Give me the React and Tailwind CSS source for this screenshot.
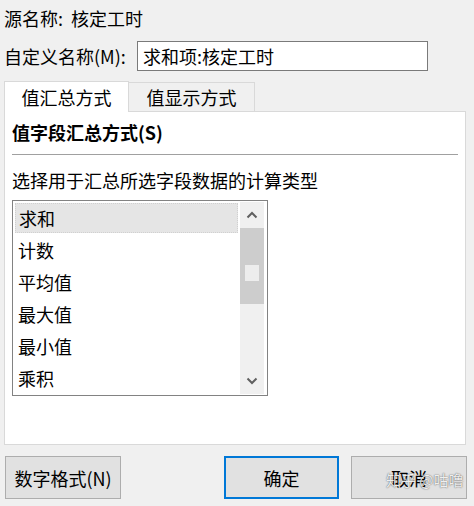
export default function App() {
    const items = ["求和", "计数", "平均值", "最大值", "最小值", "乘积"];

    return (
        <div className="w-[474px] h-[506px] bg-[#f0f0f0] overflow-hidden relative text-[18px] text-black font-['Noto_Sans_CJK_SC','Noto_Sans',sans-serif]">
            <div className="h-[41px] pl-[4px] pt-[7px] leading-[22px]">
                源名称:&nbsp;&nbsp;核定工时
            </div>

            <div className="flex items-center h-[30px]">
                <div className="w-[137px] pl-[4px] leading-[22px]">自定义名称(M):</div>
                <div className="w-[291px] h-[30px] border border-[#7a7a7a] bg-white flex items-center pl-[5px] leading-[22px]">
                    求和项:核定工时
                </div>
            </div>

            {/* tabs */}
            <div className="flex items-end h-[30px] mt-[10px] ml-[4px] relative z-10">
                <div className="w-[125px] h-[31px] -mb-px bg-white border border-b-0 border-[#d9d9d9] flex items-center justify-center leading-[22px]">
                    值汇总方式
                </div>
                <div className="w-[126px] h-[29px] bg-[#f0f0f0] border border-l-0 border-b-0 border-[#d9d9d9] flex items-center justify-center leading-[22px]">
                    值显示方式
                </div>
            </div>

            {/* panel */}
            <div className="ml-[4px] w-[462px] h-[334px] bg-white border border-[#d9d9d9] px-[7px]">
                <div className="pt-[9px] leading-[22px] font-bold">值字段汇总方式(S)</div>
                <div className="mt-[11px] h-px bg-[#a0a0a0]"></div>
                <div className="mt-[14px] leading-[22px]">选择用于汇总所选字段数据的计算类型</div>

                <div className="mt-[9px] w-[256px] h-[196px] border border-[#828282] flex pl-[2px] pr-[3px] py-[1px] gap-[2px]">
                    <div className="w-[223px] pt-[1px]">
                        {items.map((it, i) => (
                            <div key={it} className="h-[32px]">
                                <div
                                    className={`h-[30px] pl-[3px] flex items-center leading-[22px] ${
                                        i === 0 ? "bg-[#e5e5e5] border border-dotted border-[#d0d0d0] pl-[2px]" : ""
                                    }`}
                                >
                                    {it}
                                </div>
                            </div>
                        ))}
                    </div>
                    <div className="w-[24px] h-full bg-[#f0f0f0] flex flex-col">
                        <div className="h-[26px] flex items-center justify-center">
                            <svg width="12" height="8" viewBox="0 0 12 8">
                                <path d="M1.5 6.5 L6 2 L10.5 6.5" fill="none" stroke="#606060" strokeWidth="2" />
                            </svg>
                        </div>
                        <div className="h-[76px] bg-[#cdcdcd] flex items-center justify-center pt-[14px]">
                            <div className="w-[14px] h-[16px] bg-[#ededed]"></div>
                        </div>
                        <div className="flex-1"></div>
                        <div className="h-[26px] flex items-center justify-center">
                            <svg width="12" height="8" viewBox="0 0 12 8">
                                <path d="M1.5 1.5 L6 6 L10.5 1.5" fill="none" stroke="#606060" strokeWidth="2" />
                            </svg>
                        </div>
                    </div>
                </div>
            </div>

            {/* buttons */}
            <div className="flex mt-[11px]">
                <div className="ml-[5px] w-[116px] h-[43px] bg-[#e1e1e1] border border-[#adadad] flex items-center justify-center leading-[22px]">
                    数字格式(N)
                </div>
                <div className="ml-[103px] w-[115px] h-[43px] bg-[#e1e1e1] border-2 border-[#0078d7] flex items-center justify-center leading-[22px]">
                    确定
                </div>
                <div className="ml-[12px] w-[116px] h-[43px] bg-[#e1e1e1] border border-[#adadad] flex items-center justify-center leading-[22px]">
                    取消
                </div>
            </div>

            <div className="absolute left-[386px] top-[471px] text-[15px] leading-[18px] text-white/90 [text-shadow:0_0_1px_rgba(0,0,0,0.6),0_0_2px_rgba(0,0,0,0.3)] whitespace-nowrap">
                知乎 @咕噜
            </div>
        </div>
    );
}
